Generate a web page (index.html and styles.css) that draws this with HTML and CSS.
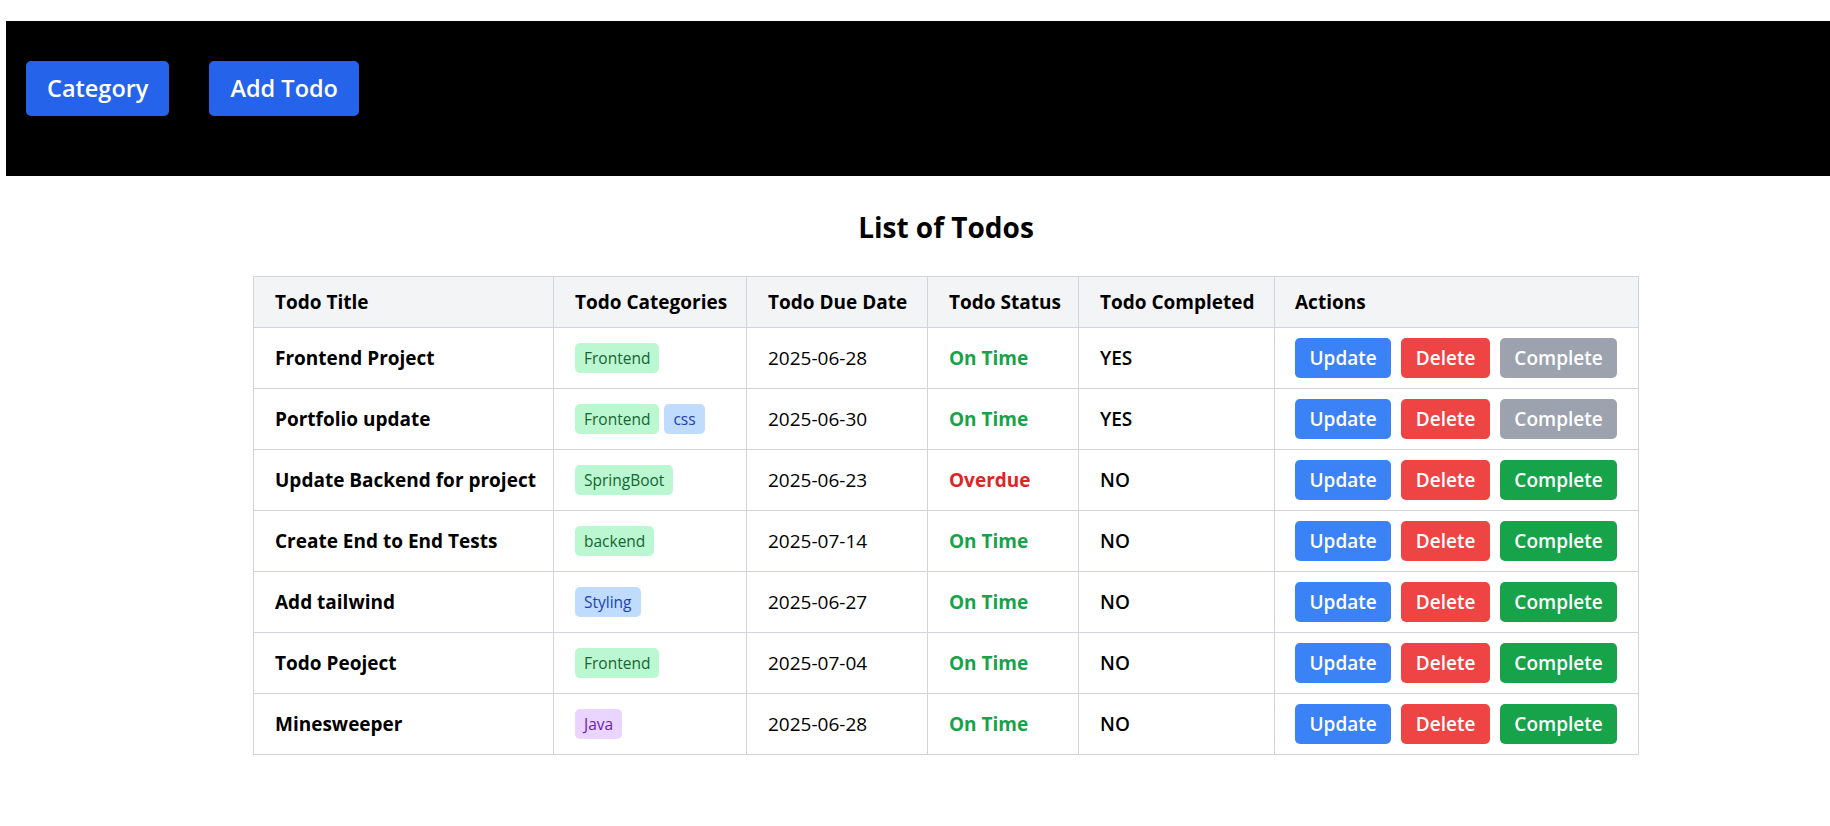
FILE: index.html
```html
<!DOCTYPE html>
<html lang="en">
<head>
<meta charset="utf-8">
<title>Todos</title>
<link rel="stylesheet" href="styles.css">
</head>
<body>
<header class="topbar">
  <button class="nav-btn">Category</button>
  <button class="nav-btn">Add Todo</button>
</header>
<main class="main">
  <h1 class="title">List of Todos</h1>
  <table class="todos">
    <colgroup>
      <col class="c1"><col class="c2"><col class="c3"><col class="c4"><col class="c5"><col class="c6">
    </colgroup>
    <thead>
      <tr>
        <th>Todo Title</th>
        <th>Todo Categories</th>
        <th>Todo Due Date</th>
        <th>Todo Status</th>
        <th>Todo Completed</th>
        <th class="act-cell">Actions</th>
      </tr>
    </thead>
    <tbody>
      <tr>
        <td class="name">Frontend Project</td>
        <td><div class="tags"><span class="tag green">Frontend</span></div></td>
        <td>2025-06-28</td>
        <td class="ok">On Time</td>
        <td class="done">YES</td>
        <td class="act-cell"><div class="actions"><button class="btn blue">Update</button><button class="btn red">Delete</button><button class="btn grey">Complete</button></div></td>
      </tr>
      <tr>
        <td class="name">Portfolio update</td>
        <td><div class="tags"><span class="tag green">Frontend</span><span class="tag blue">css</span></div></td>
        <td>2025-06-30</td>
        <td class="ok">On Time</td>
        <td class="done">YES</td>
        <td class="act-cell"><div class="actions"><button class="btn blue">Update</button><button class="btn red">Delete</button><button class="btn grey">Complete</button></div></td>
      </tr>
      <tr>
        <td class="name">Update Backend for project</td>
        <td><div class="tags"><span class="tag green">SpringBoot</span></div></td>
        <td>2025-06-23</td>
        <td class="late">Overdue</td>
        <td class="done">NO</td>
        <td class="act-cell"><div class="actions"><button class="btn blue">Update</button><button class="btn red">Delete</button><button class="btn green">Complete</button></div></td>
      </tr>
      <tr>
        <td class="name">Create End to End Tests</td>
        <td><div class="tags"><span class="tag green">backend</span></div></td>
        <td>2025-07-14</td>
        <td class="ok">On Time</td>
        <td class="done">NO</td>
        <td class="act-cell"><div class="actions"><button class="btn blue">Update</button><button class="btn red">Delete</button><button class="btn green">Complete</button></div></td>
      </tr>
      <tr>
        <td class="name">Add tailwind</td>
        <td><div class="tags"><span class="tag blue">Styling</span></div></td>
        <td>2025-06-27</td>
        <td class="ok">On Time</td>
        <td class="done">NO</td>
        <td class="act-cell"><div class="actions"><button class="btn blue">Update</button><button class="btn red">Delete</button><button class="btn green">Complete</button></div></td>
      </tr>
      <tr>
        <td class="name">Todo Peoject</td>
        <td><div class="tags"><span class="tag green">Frontend</span></div></td>
        <td>2025-07-04</td>
        <td class="ok">On Time</td>
        <td class="done">NO</td>
        <td class="act-cell"><div class="actions"><button class="btn blue">Update</button><button class="btn red">Delete</button><button class="btn green">Complete</button></div></td>
      </tr>
      <tr>
        <td class="name">Minesweeper</td>
        <td><div class="tags"><span class="tag purple">Java</span></div></td>
        <td>2025-06-28</td>
        <td class="ok">On Time</td>
        <td class="done">NO</td>
        <td class="act-cell"><div class="actions"><button class="btn blue">Update</button><button class="btn red">Delete</button><button class="btn green">Complete</button></div></td>
      </tr>
    </tbody>
  </table>
</main>
</body>
</html>
```

FILE: styles.css
```css
* { box-sizing: border-box; }

body {
  margin: 0;
  font-family: "Open Sans", "Noto Sans", Arial, sans-serif;
  color: #000;
  background: #fff;
}

.topbar {
  margin: 21px 0 0 6px;
  height: 155px;
  background: #000;
  display: flex;
  align-items: flex-start;
  gap: 40px;
  padding: 40px 20px 0 20px;
}

.nav-btn {
  height: 55px;
  padding: 0 21px;
  border: 0;
  border-radius: 5px;
  background: #2563eb;
  color: #fff;
  font-family: inherit;
  font-size: 23.5px;
  font-weight: 600;
  line-height: 55px;
}

.main {
  padding-left: 62px;
  display: flex;
  flex-direction: column;
  align-items: center;
}

.title {
  margin: 33px 0 31px 0;
  font-size: 28px;
  line-height: 36px;
  font-weight: 700;
}

.todos {
  table-layout: fixed;
  width: 1385px;
  border-collapse: collapse;
  font-size: 19px;
  line-height: 26px;
}

.c1 { width: 300px; }
.c2 { width: 193px; }
.c3 { width: 181px; }
.c4 { width: 151px; }
.c5 { width: 196px; }
.c6 { width: 364px; }

.todos th,
.todos td {
  border: 1px solid #d1d5db;
  padding: 0 19px 0 21px;
  text-align: left;
  vertical-align: middle;
  white-space: nowrap;
}

.todos .act-cell {
  padding-left: 20px;
}

.todos th {
  background: #f3f4f6;
  font-weight: 700;
  height: 51px;
}

.todos td {
  height: 61px;
}

.name { font-weight: 700; }
.ok { color: #16a34a; font-weight: 700; }
.late { color: #dc2626; font-weight: 700; }
.done { font-weight: 600; }

.tags {
  display: flex;
  gap: 5px;
}

.tag {
  display: inline-block;
  height: 30px;
  line-height: 30px;
  padding: 0 9px;
  border-radius: 5px;
  font-size: 15.5px;
  font-weight: 500;
}
.tag.green { background: #bbf7d0; color: #166534; }
.tag.blue { background: #bfdbfe; color: #1e40af; }
.tag.purple { background: #e9d5ff; color: #6b21a8; }

.actions {
  display: flex;
  gap: 10px;
}

.btn {
  height: 40px;
  padding: 0 14.5px;
  border: 0;
  border-radius: 5px;
  color: #fff;
  font-family: inherit;
  font-size: 19px;
  font-weight: 600;
  line-height: 40px;
}
.btn.blue { background: #3b82f6; }
.btn.red { background: #ef4444; }
.btn.grey { background: #9ca3af; }
.btn.green { background: #16a34a; }
```
